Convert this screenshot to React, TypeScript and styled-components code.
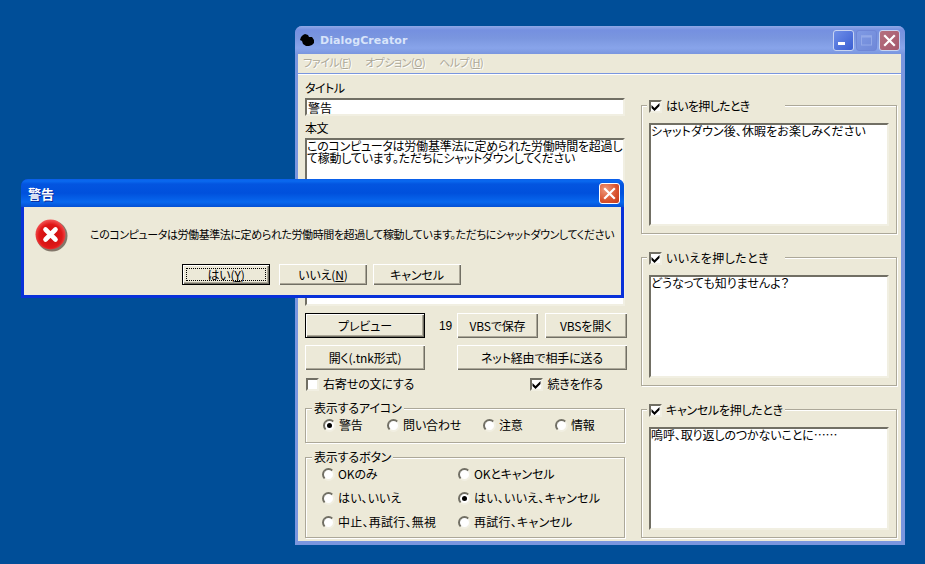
import React from "react";
import styled, { createGlobalStyle } from "styled-components";

const FONT = `"Noto Sans CJK JP", "Liberation Sans", sans-serif`;

const GlobalStyle = createGlobalStyle`
  html, body {
    margin: 0;
    padding: 0;
    background: #004e98;
  }
  * {
    box-sizing: border-box;
  }
`;

const Desktop = styled.div`
  position: relative;
  width: 925px;
  height: 564px;
  overflow: hidden;
  background: #004e98;
  font-family: ${FONT};
  font-size: 12px;
  line-height: 14px;
  letter-spacing: -0.15px;
  font-feature-settings: "palt";
  color: #000;
`;

const MainWindow = styled.div`
  position: absolute;
  left: 295px;
  top: 26px;
  width: 610px;
  height: 519px;
  display: flex;
  flex-direction: column;
  border-radius: 7px 7px 0 0;
  background: #7a96df;
  padding: 0 4px 4px 3px;
`;

const TitleBar = styled.div`
  height: 28px;
  margin: 0 -4px 0 -3px;
  padding: 1px 5px 0 5px;
  display: flex;
  align-items: center;
  border-radius: 7px 7px 0 0;
  background: linear-gradient(
    180deg,
    #8fa8e6 0,
    #7590e0 4px,
    #7a96df 12px,
    #88a4ea 22px,
    #7a96df 28px
  );
`;

const AppTitle = styled.span`
  margin: 1px 0 0 6px;
  font-family: "DejaVu Sans", sans-serif;
  font-size: 11px;
  font-weight: 700;
  letter-spacing: 0.1px;
  color: #d8e4fa;
  flex: 1;
`;

const Caption = styled.div<{ $kind: "min" | "max" | "close" | "active" }>`
  width: 21px;
  height: 21px;
  margin-left: 2px;
  border-radius: 3px;
  border: 1px solid ${(p) => (p.$kind === "active" ? "#fff" : p.$kind === "max" ? "#6f86d6" : "#c8d4f2")};
  display: flex;
  align-items: center;
  justify-content: center;
  background: ${(p) =>
    p.$kind === "close"
      ? "linear-gradient(135deg, #b5707f, #a5586c)"
      : p.$kind === "active"
        ? "radial-gradient(circle at 30% 30%, #ee9a7c, #d8512c 60%, #c33a1c)"
        : p.$kind === "min"
          ? "linear-gradient(135deg, #6f8fe8, #3a5ed2)"
          : "linear-gradient(135deg, #7f9ae4, #6f88d8)"};
`;

const MenuBar = styled.div`
  height: 20px;
  background: #ece9d8;
  display: flex;
  align-items: center;
  padding: 0 0 3px 5px;
  gap: 14px;
  font-size: 11px;
  letter-spacing: -0.5px;
  color: #aca899;
  text-shadow: 1px 1px 0 #fff;
  border-bottom: 1px solid #7a96df;
`;

const Client = styled.div`
  flex: 1;
  background: #ece9d8;
  border-top: 1px solid #fff;
  display: flex;
  padding: 0 8px 0 7px;
  gap: 14px;
  min-height: 0;
`;

const LeftColumn = styled.div`
  width: 322px;
  display: flex;
  flex-direction: column;
  padding-top: 6px;
`;

const RightColumn = styled.div`
  width: 256px;
  display: flex;
  flex-direction: column;
  padding-top: 23px;
  gap: 16px;
`;

const FieldLabel = styled.div`
  height: 14px;
  margin-bottom: 3px;
  letter-spacing: -0.5px;
`;

const TextInput = styled.input`
  width: 320px;
  height: 18px;
  margin-bottom: 5px;
  padding: 0 1px;
  font: inherit;
  letter-spacing: 0;
  font-feature-settings: inherit;
  color: #000;
  background: #fff;
  border: 2px solid;
  border-color: #716f64 #f1efe2 #f1efe2 #716f64;
  outline: none;
`;

const TextArea = styled.textarea<{ $height: number; $width: number; $tracking?: number }>`
  display: block;
  width: ${(p) => p.$width}px;
  height: ${(p) => p.$height}px;
  padding: 0;
  font: inherit;
  line-height: 12px;
  letter-spacing: ${(p) => p.$tracking ?? 0}px;
  font-feature-settings: inherit;
  color: #000;
  background: #fff;
  border: 2px solid;
  border-color: #716f64 #f1efe2 #f1efe2 #716f64;
  resize: none;
  overflow: hidden;
  outline: none;
`;

const ButtonRow = styled.div`
  display: flex;
  align-items: center;
  height: 25px;
  margin-top: 7px;
`;

const Btn = styled.button<{ $width: number; $height?: number; $isDefault?: boolean; $focused?: boolean; $gap?: number }>`
  position: relative;
  width: ${(p) => p.$width}px;
  height: ${(p) => p.$height ?? 25}px;
  margin-left: ${(p) => p.$gap ?? 0}px;
  padding: 0;
  font: inherit;
  letter-spacing: inherit;
  font-feature-settings: inherit;
  color: #000;
  background: #ece9d8;
  border: ${(p) => (p.$isDefault ? "1px solid #000" : "none")};
  box-shadow:
    inset 1px 1px 0 #fff,
    inset -1px -1px 0 #716f64,
    inset -2px -2px 0 #aca899;
  display: flex;
  align-items: center;
  justify-content: center;
  ${(p) =>
    p.$focused &&
    `
    &::after {
      content: "";
      position: absolute;
      inset: 3px;
      border: 1px dotted #000;
    }
  `}
`;

const Counter = styled.span`
  width: 32px;
  padding-right: 5px;
  text-align: right;
  font-family: "Liberation Sans", sans-serif;
`;

const OptionRow = styled.div`
  display: flex;
  justify-content: space-between;
  align-items: center;
  height: 14px;
  margin-top: 7px;
  padding: 0 24px 0 1px;
`;

const CheckLabel = styled.label`
  display: flex;
  align-items: center;
  gap: 4px;
`;

const CheckBoxMark = styled.span`
  width: 13px;
  height: 13px;
  flex: none;
  display: flex;
  align-items: center;
  justify-content: center;
  background: #fff;
  border: 2px solid;
  border-color: #716f64 #f1efe2 #f1efe2 #716f64;
`;

const Group = styled.fieldset<{ $width: number; $height: number; $top?: number }>`
  width: ${(p) => p.$width}px;
  height: ${(p) => p.$height}px;
  margin: ${(p) => p.$top ?? 0}px 0 0;
  padding: 0;
  border: 1px solid #aca899;
  box-shadow:
    1px 1px 0 #fff,
    inset 1px 1px 0 #fff;
  min-width: 0;
`;

const GroupLegend = styled.legend`
  margin: 0 0 -2px 6px;
  padding: 0 2px;
  height: 14px;
  display: flex;
  align-items: center;
  background: #ece9d8;
`;

const AnswerLegend = styled(GroupLegend)`
  width: 138px;
  margin-left: 5px;
  padding: 2px 0 0 2px;
  gap: 4px;
`;

const LegendText = styled.span<{ $tracking: number }>`
  letter-spacing: ${(p) => p.$tracking}px;
  white-space: nowrap;
`;

const IconGrid = styled.div`
  display: grid;
  grid-template-columns: 64px 96px 72px auto;
  padding-left: 17px;
`;

const ButtonGrid = styled.div`
  display: grid;
  grid-template-columns: 136px auto;
  grid-auto-rows: 24px;
  padding-left: 16px;
`;

const RadioLabel = styled.label<{ $tracking?: number }>`
  display: flex;
  align-items: center;
  gap: 3px;
  height: 24px;
  white-space: nowrap;
  letter-spacing: ${(p) => p.$tracking ?? -0.15}px;
`;

const RadioMark = styled.span<{ $on?: boolean }>`
  width: 13px;
  height: 13px;
  flex: none;
  border-radius: 50%;
  background: #fff;
  border: 2px solid;
  border-color: #716f64 #f1efe2 #f1efe2 #716f64;
  display: flex;
  align-items: center;
  justify-content: center;
  &::after {
    content: "";
    width: 5px;
    height: 5px;
    border-radius: 50%;
    background: ${(p) => (p.$on ? "#000" : "transparent")};
  }
`;

const AnswerBody = styled.div`
  padding: 13px 0 0 7px;
`;

const Dialog = styled.div`
  position: absolute;
  left: 21px;
  top: 179px;
  width: 603px;
  height: 119px;
  display: flex;
  flex-direction: column;
  border-radius: 7px 7px 0 0;
  background: #0831d9;
  padding: 0 3px 3px;
`;

const DialogTitleBar = styled.div`
  height: 28px;
  margin: 0 -3px;
  padding: 0 4px 0 7px;
  display: flex;
  align-items: center;
  border-radius: 7px 7px 0 0;
  background: linear-gradient(
    180deg,
    #0a5de8 0,
    #0a6af0 2px,
    #0355e0 5px,
    #0050dc 14px,
    #0868ee 23px,
    #0450d4 28px
  );
`;

const DialogTitle = styled.span`
  flex: 1;
  margin-top: 2px;
  font-size: 13px;
  letter-spacing: 0;
  font-weight: 700;
  color: #fff;
  text-shadow: 1px 1px 0 #0a2a9a;
`;

const DialogBody = styled.div`
  flex: 1;
  background: #ece9d8;
  display: flex;
  flex-direction: column;
  padding: 12px 0 0 11px;
`;

const MessageRow = styled.div`
  display: flex;
  align-items: center;
  gap: 22px;
  height: 33px;
`;

const MessageText = styled.span`
  font-size: 11px;
  letter-spacing: -0.42px;
  white-space: nowrap;
  margin-bottom: 4px;
`;

const DialogButtons = styled.div`
  display: flex;
  margin: 12px 0 0 147px;
`;

const ErrorSvg = styled.svg`
  flex: none;
  width: 33px;
  height: 33px;
`;

const ErrorIcon = () => (
  <ErrorSvg viewBox="0 0 33 33">
    <defs>
      <radialGradient id="errorFill" cx="50%" cy="55%" r="55%">
        <stop offset="0" stopColor="#c80c0c" />
        <stop offset="0.7" stopColor="#e01818" />
        <stop offset="1" stopColor="#f45858" />
      </radialGradient>
    </defs>
    <circle cx="17" cy="17" r="15.5" fill="#4a3a30" opacity="0.65" />
    <circle cx="15.5" cy="15.5" r="15" fill="url(#errorFill)" />
    <path d="M10.5 10.5 L20.5 20.5 M20.5 10.5 L10.5 20.5" stroke="#fff" strokeWidth="4.6" strokeLinecap="round" />
  </ErrorSvg>
);

const CheckIcon = () => (
  <svg width="9" height="9" viewBox="0 0 9 9">
    <path d="M0.5 3 L3.5 6 L8.5 1 V4 L3.5 9 L0.5 6 Z" fill="#000" />
  </svg>
);

const CloseGlyph = () => (
  <svg width="13" height="13" viewBox="0 0 13 13">
    <path d="M2 2 L11 11 M11 2 L2 11" stroke="#fff" strokeWidth="2.2" strokeLinecap="square" />
  </svg>
);

const AppIcon = () => (
  <svg width="14" height="13" viewBox="0 0 14 13">
    <path d="M1 3 L3 1 L5 0 L8 1 L9 3 L12 3 L14 6 L14 9 L12 11 L9 12 L6 12 L3 10 L2 7 L0 6 Z" fill="#000" />
  </svg>
);

const Check = ({ children }: { children: React.ReactNode }) => (
  <CheckLabel>
    <CheckBoxMark>
      <CheckIcon />
    </CheckBoxMark>
    {children}
  </CheckLabel>
);

const Radio = ({ on, tracking, children }: { on?: boolean; tracking?: number; children: React.ReactNode }) => (
  <RadioLabel $tracking={tracking}>
    <RadioMark $on={on} />
    {children}
  </RadioLabel>
);

const answers = [
  { title: "はいを押したとき", text: "シャットダウン後、休暇をお楽しみください", titleTracking: -0.7, tracking: 0.1 },
  { title: "いいえを押したとき", text: "どうなっても知りませんよ？", titleTracking: 0.4, tracking: 0 },
  { title: "キャンセルを押したとき", text: "嗚呼、取り返しのつかないことに……", titleTracking: -0.3, tracking: -0.1 },
];

const MESSAGE = "このコンピュータは労働基準法に定められた労働時間を超過して稼動しています。ただちにシャットダウンしてください";

const App = () => (
  <Desktop>
    <GlobalStyle />
    <MainWindow>
      <TitleBar>
        <AppIcon />
        <AppTitle>DialogCreator</AppTitle>
        <Caption $kind="min">
          <svg width="13" height="13" viewBox="0 0 13 13">
            <rect x="1" y="8" width="7" height="3" fill="#fff" />
          </svg>
        </Caption>
        <Caption $kind="max">
          <svg width="13" height="13" viewBox="0 0 13 13">
            <rect x="1.5" y="2" width="10" height="9" fill="none" stroke="#93a9e8" />
            <rect x="1" y="1.5" width="11" height="2" fill="#93a9e8" />
          </svg>
        </Caption>
        <Caption $kind="close">
          <CloseGlyph />
        </Caption>
      </TitleBar>
      <MenuBar>
        <span>ファイル(<u>F</u>)</span>
        <span>オプション(<u>O</u>)</span>
        <span>ヘルプ(<u>H</u>)</span>
      </MenuBar>
      <Client>
        <LeftColumn>
          <FieldLabel>タイトル</FieldLabel>
          <TextInput readOnly value="警告" />
          <FieldLabel>本文</FieldLabel>
          <TextArea
            readOnly
            $width={320}
            $height={168}
            $tracking={-0.25}
            value={"このコンピュータは労働基準法に定められた労働時間を超過し\nて稼動しています。ただちにシャットダウンしてください"}
          />
          <ButtonRow>
            <Btn $width={120} $isDefault>プレビュー</Btn>
            <Counter>19</Counter>
            <Btn $width={81}>VBSで保存</Btn>
            <Btn $width={82} $gap={7}>VBSを開く</Btn>
          </ButtonRow>
          <ButtonRow>
            <Btn $width={120}>開く(.tnk形式)</Btn>
            <Btn $width={170} $gap={32}>ネット経由で相手に送る</Btn>
          </ButtonRow>
          <OptionRow>
            <CheckLabel>
              <CheckBoxMark />
              右寄せの文にする
            </CheckLabel>
            <Check>続きを作る</Check>
          </OptionRow>
          <Group $width={320} $height={42} $top={10}>
            <GroupLegend>表示するアイコン</GroupLegend>
            <IconGrid>
              <Radio on>警告</Radio>
              <Radio>問い合わせ</Radio>
              <Radio>注意</Radio>
              <Radio>情報</Radio>
            </IconGrid>
          </Group>
          <Group $width={320} $height={88} $top={7}>
            <GroupLegend>表示するボタン</GroupLegend>
            <ButtonGrid>
              <Radio>OKのみ</Radio>
              <Radio>OKとキャンセル</Radio>
              <Radio tracking={0.1}>はい、いいえ</Radio>
              <Radio on tracking={0.25}>はい、いいえ、キャンセル</Radio>
              <Radio tracking={0.25}>中止、再試行、無視</Radio>
              <Radio tracking={0.25}>再試行、キャンセル</Radio>
            </ButtonGrid>
          </Group>
        </LeftColumn>
        <RightColumn>
          {answers.map((a) => (
            <Group key={a.title} $width={256} $height={136}>
              <AnswerLegend>
                <CheckBoxMark>
                  <CheckIcon />
                </CheckBoxMark>
                <LegendText $tracking={a.titleTracking}>{a.title}</LegendText>
              </AnswerLegend>
              <AnswerBody>
                <TextArea readOnly $width={240} $height={103} $tracking={a.tracking} value={a.text} />
              </AnswerBody>
            </Group>
          ))}
        </RightColumn>
      </Client>
    </MainWindow>
    <Dialog>
      <DialogTitleBar>
        <DialogTitle>警告</DialogTitle>
        <Caption $kind="active">
          <CloseGlyph />
        </Caption>
      </DialogTitleBar>
      <DialogBody>
        <MessageRow>
          <ErrorIcon />
          <MessageText>{MESSAGE}</MessageText>
        </MessageRow>
        <DialogButtons>
          <Btn $width={88} $height={21} $isDefault $focused>はい(<u>Y</u>)</Btn>
          <Btn $width={88} $height={21} $gap={9}>いいえ(<u>N</u>)</Btn>
          <Btn $width={88} $height={21} $gap={6}>キャンセル</Btn>
        </DialogButtons>
      </DialogBody>
    </Dialog>
  </Desktop>
);

export default App;
